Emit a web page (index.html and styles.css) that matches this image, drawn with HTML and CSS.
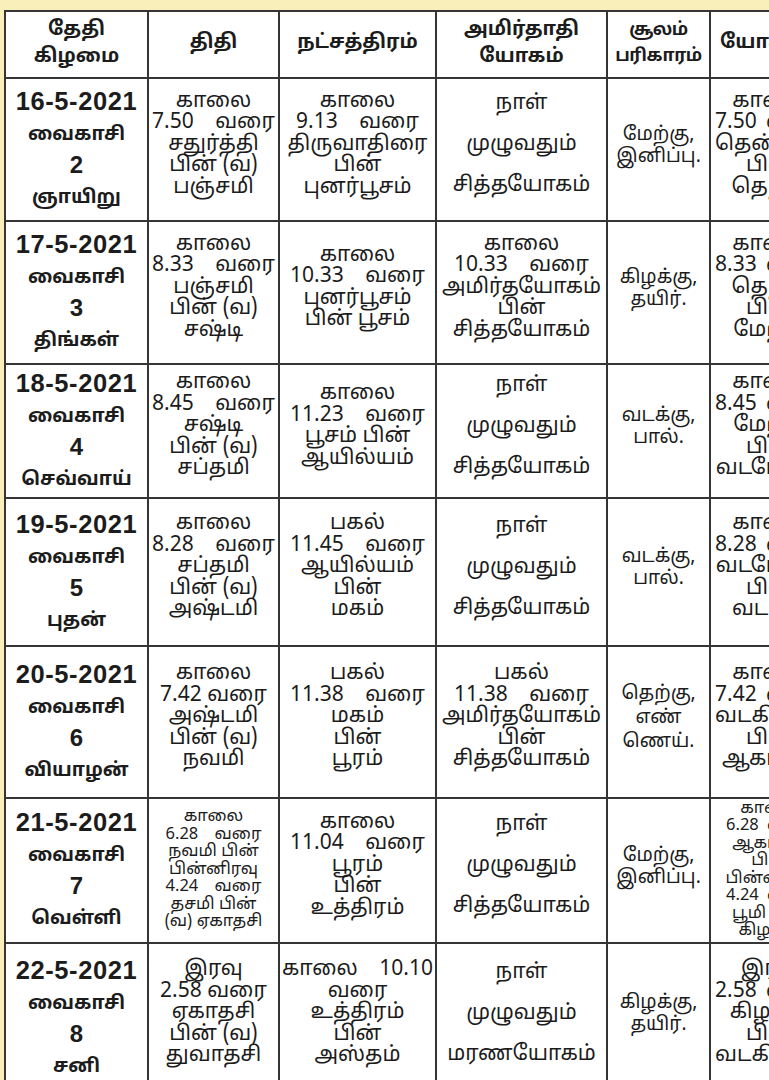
FILE: index.html
```html
<!DOCTYPE html>
<html lang="ta">
<head>
<meta charset="utf-8">
<title>வைகாசி பஞ்சாங்கம்</title>
<link rel="stylesheet" href="styles.css">
</head>
<body>
<div class="sheet">
<table class="cal">
  <colgroup>
    <col class="c-date"><col class="c-thithi"><col class="c-star"><col class="c-yoga"><col class="c-soolam"><col class="c-yogini">
  </colgroup>
  <thead>
    <tr class="head">
      <th>தேதி<br>கிழமை</th>
      <th>திதி</th>
      <th>நட்சத்திரம்</th>
      <th>அமிர்தாதி<br>யோகம்</th>
      <th class="tight">சூலம்<br>பரிகாரம்</th>
      <th class="left">யோகினி</th>
    </tr>
  </thead>
  <tbody>
    <tr class="r1">
      <td class="date"><span class="big">16-5-2021</span><br>வைகாசி<br><span class="num">2</span><br>ஞாயிறு</td>
      <td>காலை<br><span class="t">7.50 வரை</span><br>சதுர்த்தி<br>பின் (வ)<br>பஞ்சமி</td>
      <td>காலை<br><span class="t">9.13 வரை</span><br>திருவாதிரை<br>பின்<br>புனர்பூசம்</td>
      <td class="wide">நாள்<br>முழுவதும்<br>சித்தயோகம்</td>
      <td class="small">மேற்கு,<br>இனிப்பு.</td>
      <td class="cut">காலை<br><span class="t">7.50 வரை</span><br>தென்மேற்கு<br>பின்<br>தெற்கு</td>
    </tr>
    <tr class="r2">
      <td class="date"><span class="big">17-5-2021</span><br>வைகாசி<br><span class="num">3</span><br>திங்கள்</td>
      <td>காலை<br><span class="t">8.33 வரை</span><br>பஞ்சமி<br>பின் (வ)<br>சஷ்டி</td>
      <td>காலை<br><span class="t">10.33 வரை</span><br>புனர்பூசம்<br>பின் பூசம்</td>
      <td>காலை<br><span class="t">10.33 வரை</span><br>அமிர்தயோகம்<br>பின்<br>சித்தயோகம்</td>
      <td class="small">கிழக்கு,<br>தயிர்.</td>
      <td class="cut">காலை<br><span class="t">8.33 வரை</span><br>தெற்கு<br>பின்<br>மேற்கு</td>
    </tr>
    <tr class="r3">
      <td class="date"><span class="big">18-5-2021</span><br>வைகாசி<br><span class="num">4</span><br>செவ்வாய்</td>
      <td>காலை<br><span class="t">8.45 வரை</span><br>சஷ்டி<br>பின் (வ)<br>சப்தமி</td>
      <td>காலை<br><span class="t">11.23 வரை</span><br>பூசம் பின்<br>ஆயில்யம்</td>
      <td class="wide">நாள்<br>முழுவதும்<br>சித்தயோகம்</td>
      <td class="small">வடக்கு,<br>பால்.</td>
      <td class="cut">காலை<br><span class="t">8.45 வரை</span><br>மேற்கு<br>பின்<br>வடமேற்கு</td>
    </tr>
    <tr class="r4">
      <td class="date"><span class="big">19-5-2021</span><br>வைகாசி<br><span class="num">5</span><br>புதன்</td>
      <td>காலை<br><span class="t">8.28 வரை</span><br>சப்தமி<br>பின் (வ)<br>அஷ்டமி</td>
      <td>பகல்<br><span class="t">11.45 வரை</span><br>ஆயில்யம்<br>பின்<br>மகம்</td>
      <td class="wide">நாள்<br>முழுவதும்<br>சித்தயோகம்</td>
      <td class="small">வடக்கு,<br>பால்.</td>
      <td class="cut">காலை<br><span class="t">8.28 வரை</span><br>வடமேற்கு<br>பின்<br>வடக்கு</td>
    </tr>
    <tr class="r5">
      <td class="date"><span class="big">20-5-2021</span><br>வைகாசி<br><span class="num">6</span><br>வியாழன்</td>
      <td>காலை<br>7.42 வரை<br>அஷ்டமி<br>பின் (வ)<br>நவமி</td>
      <td>பகல்<br><span class="t">11.38 வரை</span><br>மகம்<br>பின்<br>பூரம்</td>
      <td>பகல்<br><span class="t">11.38 வரை</span><br>அமிர்தயோகம்<br>பின்<br>சித்தயோகம்</td>
      <td class="small loose">தெற்கு,<br>எண்<br>ணெய்.</td>
      <td class="cut">காலை<br><span class="t">7.42 வரை</span><br>வடகிழக்கு<br>பின்<br>ஆகாயம்</td>
    </tr>
    <tr class="r6">
      <td class="date"><span class="big">21-5-2021</span><br>வைகாசி<br><span class="num">7</span><br>வெள்ளி</td>
      <td class="tiny">காலை<br><span class="t">6.28 வரை</span><br>நவமி பின்<br>பின்னிரவு<br><span class="t">4.24 வரை</span><br>தசமி பின்<br>(வ) ஏகாதசி</td>
      <td>காலை<br><span class="t">11.04 வரை</span><br>பூரம்<br>பின்<br>உத்திரம்</td>
      <td class="wide">நாள்<br>முழுவதும்<br>சித்தயோகம்</td>
      <td class="small">மேற்கு,<br>இனிப்பு.</td>
      <td class="cut tiny">காலை<br><span class="t">6.28 வரை</span><br>ஆகாயம்<br>பின்<br>பின்னிரவு<br><span class="t">4.24 வரை</span><br>பூமி பின்<br>கிழக்கு</td>
    </tr>
    <tr class="r7">
      <td class="date"><span class="big">22-5-2021</span><br>வைகாசி<br><span class="num">8</span><br>சனி</td>
      <td>இரவு<br>2.58 வரை<br>ஏகாதசி<br>பின் (வ)<br>துவாதசி</td>
      <td><span class="t">காலை 10.10</span><br>வரை<br>உத்திரம்<br>பின்<br>அஸ்தம்</td>
      <td class="wide">நாள்<br>முழுவதும்<br>மரணயோகம்</td>
      <td class="small">கிழக்கு,<br>தயிர்.</td>
      <td class="cut">இரவு<br><span class="t">2.58 வரை</span><br>கிழக்கு<br>பின்<br>வடகிழக்கு</td>
    </tr>
  </tbody>
</table>
</div>
</body>
</html>
```

FILE: styles.css
```css
html, body {
  margin: 0;
  padding: 0;
  background: #f8efbb;
  overflow: hidden;
  width: 769px;
  height: 1080px;
}

.sheet {
  padding: 10px 0 0 4px;
}

.cal {
  border-collapse: collapse;
  table-layout: fixed;
  width: 821px;
  background: #ffffff;
  color: #1c1c1c;
  font-family: "Noto Sans Tamil", "Lohit Tamil", "Noto Sans", sans-serif;
}

.c-date { width: 143px; }
.c-thithi { width: 131px; }
.c-star { width: 157px; }
.c-yoga { width: 171px; }
.c-soolam { width: 103px; }
.c-yogini { width: 116px; }

.cal th,
.cal td {
  border: 2.5px solid #353535;
  text-align: center;
  vertical-align: middle;
  padding: 0;
}

.cal th {
  font-size: 19.5px;
  line-height: 27px;
  font-weight: 700;
  padding-bottom: 2px;
}

.cal th.tight {
  font-size: 17.5px;
  letter-spacing: -0.4px;
  line-height: 26px;
}

.cal th.left {
  text-align: left;
  padding-left: 9px;
}

.head { height: 67px; }
.r1 { height: 143px; }
.r2 { height: 143px; }
.r3 { height: 134px; }
.r4 { height: 148px; }
.r5 { height: 152px; }
.r6 { height: 145px; }
.r7 { height: 150px; }

.cal td {
  font-size: 21px;
  line-height: 21.5px;
  padding-bottom: 8px;
}

.cal td .t {
  word-spacing: 16px;
  white-space: nowrap;
}

.cal td.date {
  font-weight: 700;
  font-size: 19px;
  line-height: 30px;
  padding-bottom: 0;
}

.date .big {
  font-family: "Liberation Sans", Arial, sans-serif;
  font-size: 25.5px;
  letter-spacing: 0.6px;
}

.date .num {
  font-family: "Liberation Sans", Arial, sans-serif;
  font-size: 24px;
}

.cal td.wide {
  font-size: 21px;
  line-height: 41px;
}

.cal td.small {
  font-size: 19px;
  line-height: 22px;
}

.cal td.loose {
  line-height: 24px;
}

.cal td.tiny {
  font-size: 16.5px;
  line-height: 17.5px;
  padding-bottom: 0;
}

.cal td.tiny .t {
  word-spacing: 12px;
}

.cal td.cut {
  white-space: nowrap;
  padding-left: 4px;
}

.cal td.cut .t {
  word-spacing: 4px;
}
```
